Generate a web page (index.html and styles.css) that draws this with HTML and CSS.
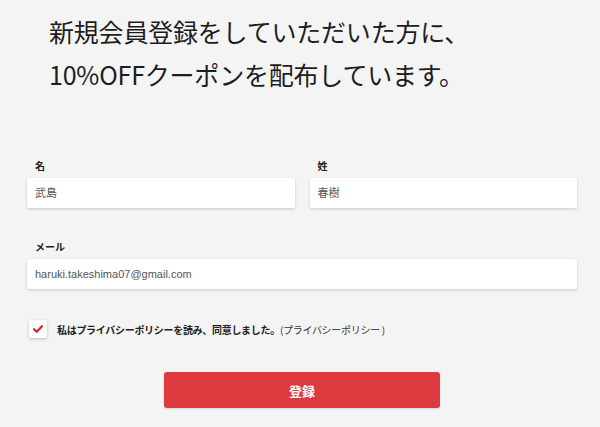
FILE: index.html
```html
<!DOCTYPE html>
<html lang="ja">
<head>
	<meta charset="utf-8" />
	<title>新規会員登録</title>
	<link rel="stylesheet" href="styles.css">
</head>
<body>

	<main>

		<h1>新規会員登録をしていただいた方に、<br>10%OFFクーポンを配布しています。</h1>

		<form>
			<div class="row">
				<div class="field">
					<label>名</label>
					<div class="input">武島</div>
				</div>
				<div class="field">
					<label>姓</label>
					<div class="input">春樹</div>
				</div>
			</div>

			<div class="row">
				<div class="field">
					<label>メール</label>
					<div class="input">haruki.takeshima07@gmail.com</div>
				</div>
			</div>

			<div class="agree">
				<span class="check">
					<svg width="10" height="8" viewBox="0 0 10 8"><path d="M1 4.2 L3.8 6.8 L9 1.2" fill="none" stroke="#d9232b" stroke-width="2.2" stroke-linecap="round" stroke-linejoin="round"/></svg>
				</span>
				<p>私はプライバシーポリシーを読み、同意しました。<span>(プライバシーポリシー )</span></p>
			</div>

			<div class="submit">
				<button type="button">登録</button>
			</div>
		</form>

	</main>

</body>
</html>
```

FILE: styles.css
```css
* {
	box-sizing: border-box;
	font-family: "Noto Sans CJK JP", "Noto Sans", sans-serif;
}

body {
	margin: 0;
	padding: 0;
	background: #f4f4f4;
	color: #222;
}

main {
	width: 600px;
	height: 427px;
	padding: 10px 0 0 0;
}

h1 {
	margin: 0 0 0 49px;
	font-size: 25px;
	font-weight: 400;
	line-height: 43px;
	color: #1d1d1d;
	letter-spacing: -0.2px;
}

form {
	margin: 63px 23px 0 27px;
}

.row {
	display: flex;
	gap: 15px;
	margin-bottom: 32px;
}

.field {
	flex: 1;
}

.field label {
	display: block;
	margin: 0 0 5px 8px;
	font-size: 10px;
	font-weight: 700;
	line-height: 14px;
	color: #222;
}

.input {
	height: 30px;
	padding: 0 8px;
	background: #fff;
	border-radius: 2px;
	box-shadow: 0 1px 3px rgba(0, 0, 0, 0.18);
	font-family: "Liberation Sans", "Noto Sans CJK JP", sans-serif;
	font-size: 11px;
	line-height: 30px;
	color: #555;
}

.agree {
	display: flex;
	align-items: center;
	gap: 10px;
	margin: -1px 0 0 2px;
}

.check {
	display: flex;
	align-items: center;
	justify-content: center;
	width: 18px;
	height: 18px;
	background: #fff;
	border-radius: 2px;
	box-shadow: 0 1px 3px rgba(0, 0, 0, 0.25);
}

.agree p {
	margin: 0;
	font-size: 10px;
	font-weight: 700;
	letter-spacing: -0.3px;
	color: #222;
}

.agree p span {
	font-weight: 400;
	color: #333;
}

.submit {
	display: flex;
	justify-content: center;
	margin: 34px 0 0 0;
}

.submit button {
	width: 276px;
	height: 36px;
	border: none;
	border-radius: 3px;
	background: #dd3a3f;
	color: #fff;
	font-size: 13px;
	font-weight: 700;
	box-shadow: 0 1px 2px rgba(0, 0, 0, 0.12);
}
```
